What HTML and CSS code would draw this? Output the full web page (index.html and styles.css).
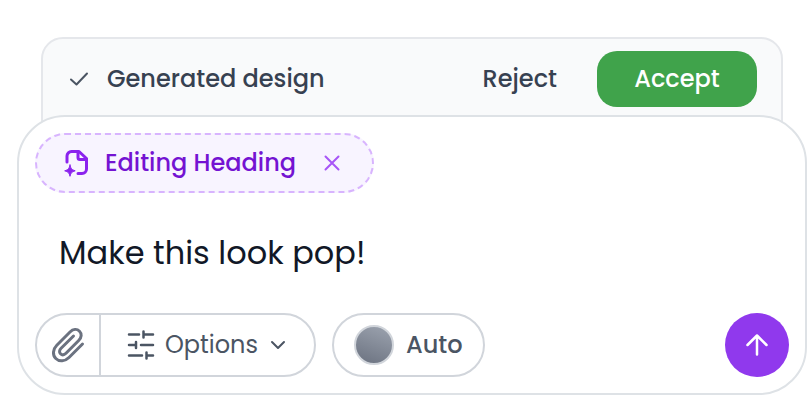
FILE: index.html
```html
<!DOCTYPE html>
<html lang="en">
<head>
    <meta charset="UTF-8">
    <meta name="viewport" content="width=device-width, initial-scale=1.0">
    <title>Design Prompt</title>
    <link rel="stylesheet" href="styles.css">
</head>
<body>
    <main class="prompt-panel">
        <div class="review-bar">
            <svg class="review-check" viewBox="0 0 20 16" width="20" height="16">
                <path d="M2 8.500l5.500 5L18 2.500"/>
            </svg>
            <span class="review-title">Generated design</span>
            <button class="reject-button" type="button">Reject</button>
            <button class="accept-button" type="button">Accept</button>
        </div>

        <form class="composer">
            <div class="context-chip">
                <svg class="chip-icon" viewBox="0 0 28 28" width="28" height="28">
                    <path d="M6 13V7a4.500 4.500 0 0 1 4.500-4.500H18L25.500 9.500V20a4.500 4.500 0 0 1-4.500 4.500H17"/>
                    <path d="M17 3v5.500a2 2 0 0 0 2 2H25"/>
                    <path class="chip-spark" d="M9 16c.8 3.700 1.700 4.700 5.200 5.800-3.500 1-4.400 2-5.200 5.500-.8-3.500-1.700-4.500-5.300-5.500 3.600-1.100 4.500-2.100 5.300-5.800z"/>
                </svg>
                <span>Editing Heading</span>
                <button class="chip-close" type="button" aria-label="Remove heading">
                    <svg viewBox="0 0 16 16" width="16" height="16">
                        <path d="M1.500 1.500l13 13M14.500 1.500l-13 13"/>
                    </svg>
                </button>
            </div>

            <input class="prompt-input" type="text" aria-label="Prompt" value="Make this look pop!">

            <div class="toolbar">
                <div class="button-group">
                    <button class="attach-button" type="button" aria-label="Attach file">
                        <svg viewBox="0 0 36 40" width="36" height="40">
                            <path d="M32.500 19L19 32.500c-4 4-9.700 4.500-13.200 1s-3-9.200 1-13.200L20 7c3-3 7-3.300 9.500-.8s2.200 6.300-.8 9.300L16 28.200c-1.800 1.800-4 2-5.500.5s-1.200-3.700.6-5.500L23.500 11"/>
                        </svg>
                    </button>
                    <button class="options-button" type="button">
                        <svg viewBox="0 0 28 30" width="28" height="30">
                            <path d="M2 4.500h10M16.500 1.500v6M16.500 4.500h9.500M2 15h7M9 12v6M14 15h12M2 25.500h13M19.500 22.500v6M19.500 25.500h6.500"/>
                        </svg>
                        <span>Options</span>
                        <svg class="chevron" viewBox="0 0 16 10" width="16" height="10">
                            <path d="M2 2l6 6 6-6"/>
                        </svg>
                    </button>
                </div>
                <button class="auto-button" type="button">
                    <span class="swatch"></span>
                    <span>Auto</span>
                </button>
                <button class="send-button" type="submit" aria-label="Send">
                    <svg viewBox="0 0 24 24" width="24" height="24">
                        <path d="M12 21.500V2.500M2.500 12L12 2.500l9.500 9.500"/>
                    </svg>
                </button>
            </div>
        </form>
    </main>
</body>
</html>
```

FILE: styles.css
```css
* {
    box-sizing: border-box;
}

body {
    margin: 0;
    padding: 37px 4px 6px 17px;
    background-color: #fff;
    font-family: Poppins, Inter, sans-serif;
    font-size: 24px;
    font-weight: 500;
    line-height: 36px;
}

button,
input {
    padding: 0;
    border: none;
    background: none;
    color: inherit;
    font: inherit;
}

button {
    display: flex;
    align-items: center;
    justify-content: center;
    cursor: pointer;
}

svg {
    flex: none;
    fill: none;
    stroke: currentColor;
    stroke-width: 2.5;
    stroke-linecap: round;
    stroke-linejoin: round;
}

.review-bar {
    display: flex;
    align-items: center;
    margin: 0 24px;
    padding: 12px 24px 32px 26px;
    border: 2px solid #e5e7eb;
    border-radius: 22px 22px 0 0;
    background-color: #f9fafb;
    color: #374151;
}

.review-check {
    margin-right: 18px;
    color: #4b5563;
    stroke-width: 2;
}

.review-title {
    flex: 1;
    white-space: nowrap;
}

.reject-button {
    padding: 10px 40px 10px 24px;
}

.accept-button {
    width: 160px;
    height: 56px;
    border-radius: 20px;
    background-color: #40a34b;
    color: #fff;
}

/* overlaps the bottom edge of the review bar */
.composer {
    position: relative;
    margin-top: -26px;
    padding: 16px;
    border: 2px solid #dee2e6;
    border-radius: 48px;
    background-color: #fff;
}

.context-chip {
    display: flex;
    align-items: center;
    width: fit-content;
    height: 60px;
    padding: 0 24px;
    border: 2px dashed #d8b4fe;
    border-radius: 30px;
    background-color: #f8f4ff;
    color: #7413d2;
}

.chip-icon {
    margin-right: 16px;
    color: #8b22ee;
    stroke-width: 3;
}

.chip-icon .chip-spark {
    fill: currentColor;
    stroke-width: 1;
}

.chip-close {
    width: 32px;
    height: 32px;
    margin-left: 20px;
    color: #a855f7;
}

.chip-close svg {
    stroke-width: 2;
}

.prompt-input {
    display: block;
    width: 100%;
    height: 120px;
    padding: 0 24px;
    color: #111827;
    font-size: 32px;
    font-weight: 400;
    outline: none;
}

.toolbar {
    display: flex;
    gap: 16px;
    color: #4b5563;
}

.button-group,
.auto-button {
    display: flex;
    height: 64px;
    border: 2px solid #d1d5db;
    border-radius: 32px;
}

.attach-button {
    width: 64px;
    border-right: 2px solid #d1d5db;
    color: #6b7280;
}

.attach-button svg {
    stroke-width: 3;
}

.options-button {
    gap: 10px;
    padding: 0 28px 0 26px;
    font-weight: 400;
}

.options-button .chevron {
    margin-left: 2px;
    stroke-width: 2;
}

.auto-button {
    gap: 12px;
    padding: 0 20px;
}

.swatch {
    width: 40px;
    height: 40px;
    border: 2px solid #d1d5db;
    border-radius: 50%;
    background: linear-gradient(20deg, #6b7280, #9ca3af);
}

.send-button {
    width: 64px;
    height: 64px;
    margin-left: auto;
    border-radius: 50%;
    background-color: #9039ed;
    color: #fff;
}
```
